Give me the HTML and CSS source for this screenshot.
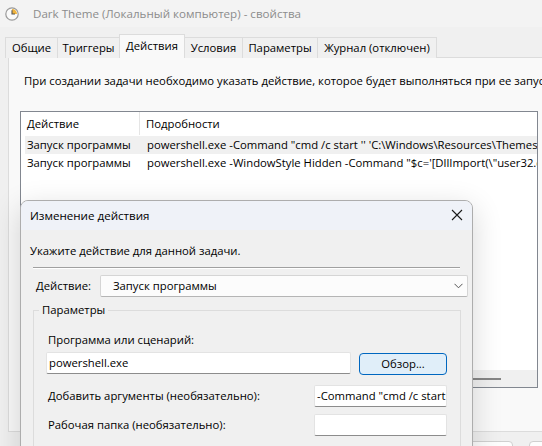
FILE: index.html
```html
<!DOCTYPE html>
<html lang="ru">
<head>
<meta charset="utf-8">
<link rel="stylesheet" href="styles.css">
</head>
<body>
<div class="titlebar">
  <svg class="clock" width="14" height="14" viewBox="0 0 14 14">
    <circle cx="7" cy="7" r="6.2" fill="#fafafa" stroke="#9a9a9a" stroke-width="1.2"/>
    <path d="M7 7 L7 2 A5 5 0 0 1 12 7 Z" fill="#f0b43c"/>
    <path d="M7 3.2 V7 H10" fill="none" stroke="#555" stroke-width="1.1"/>
  </svg>
  <span class="title-text">Dark Theme (Локальный компьютер) - свойства</span>
</div>
<div class="tabs">
  <div class="tab t1">Общие</div>
  <div class="tab t2">Триггеры</div>
  <div class="tab t3 active">Действия</div>
  <div class="tab t4">Условия</div>
  <div class="tab t5">Параметры</div>
  <div class="tab t6">Журнал (отключен)</div>
</div>
<div class="panel">
  <p class="intro">При создании задачи необходимо указать действие, которое будет выполняться при ее запуске.</p>
  <div class="list">
    <div class="list-head">
      <div class="col1 head-col1">Действие</div>
      <div class="col2">Подробности</div>
    </div>
    <div class="row sel">
      <div class="col1">Запуск программы</div>
      <div class="col2">powershell.exe -Command "cmd /c start '' 'C:\Windows\Resources\Themes\dark.theme'"</div>
    </div>
    <div class="row">
      <div class="col1">Запуск программы</div>
      <div class="col2">powershell.exe -WindowStyle Hidden -Command "$c='[DllImport(\"user32.dll\")]"</div>
    </div>
    <div class="list-fill"></div>
    <div class="hscroll"><div class="thumb"></div></div>
  </div>
</div>
<div class="bottom-buttons">
  <div class="pbtn">Создать...</div>
  <div class="pbtn">Изменить...</div>
</div>

<div class="dialog">
  <div class="dlg-title">
    <span>Изменение действия</span>
    <svg class="close" width="12" height="12" viewBox="0 0 12 12">
      <path d="M1 1 L11 11 M11 1 L1 11" stroke="#1a1a1a" stroke-width="1.1" fill="none"/>
    </svg>
  </div>
  <div class="dlg-body">
    <p class="dlg-intro">Укажите действие для данной задачи.</p>
    <div class="sep"></div>
    <div class="action-row">
      <span class="action-label">Действие:</span>
      <div class="combo">
        <span>Запуск программы</span>
        <svg width="9" height="6" viewBox="0 0 9 6"><path d="M0.5 0.8 L4.5 4.8 L8.5 0.8" stroke="#555" stroke-width="1" fill="none"/></svg>
      </div>
    </div>
    <fieldset class="group">
      <legend>Параметры</legend>
      <div class="grp-inner">
        <div class="lbl first">Программа или сценарий:</div>
        <div class="prog-row">
          <div class="input wide">powershell.exe</div>
          <div class="browse">Обзор...</div>
        </div>
        <div class="arg-row r1">
          <span class="lbl">Добавить аргументы (необязательно):</span>
          <div class="input narrow">-Command "cmd /c start '' 'C:\Windows'"</div>
        </div>
        <div class="arg-row r2">
          <span class="lbl">Рабочая папка (необязательно):</span>
          <div class="input narrow"></div>
        </div>
      </div>
    </fieldset>
  </div>
</div>
</body>
</html>
```
FILE: styles.css
```css
* { box-sizing: border-box; }
html, body {
  margin: 0;
  width: 542px;
  height: 446px;
  overflow: hidden;
}
body {
  position: relative;
  background: #f0f0f0;
  font-family: "Open Sans", "Noto Sans", sans-serif;
  font-size: 11.3px;
  line-height: 16px;
  color: #000;
}
.titlebar {
  height: 27px;
  background: #f3f3f3;
  display: flex;
  align-items: center;
  padding-left: 5px;
}
.clock { flex: none; }
.title-text {
  margin-left: 14px;
  color: #8c8c8c;
  white-space: nowrap;
  font-size: 11.6px;
}
.tabs {
  display: flex;
  align-items: flex-end;
  margin-left: 5px;
  height: 31px;
  position: relative;
  z-index: 1;
  margin-bottom: -1px;
}
.tab {
  height: 21px;
  padding-top: 2px;
  border: 1px solid #dcdcdc;
  border-bottom: none;
  border-right: none;
  background: #f0f0f0;
  white-space: nowrap;
  text-align: center;
}
.tab.t1 { width: 52px; }
.tab.t2 { width: 62px; }
.tab.t3 { width: 66px; }
.tab.t4 { width: 57px; }
.tab.t5 { width: 75px; }
.tab.t6 { width: 120px; border-right: 1px solid #dcdcdc; }
.tab.active {
  height: 24px;
  padding-top: 3px;
  background: #f9f9f9;
  border-right: 1px solid #dcdcdc;
}
.tab.active + .tab { border-left: none; }
.panel {
  margin-left: 8px;
  width: 560px;
  height: 375px;
  background: #f9f9f9;
  border: 1px solid #dcdcdc;
  padding: 15px 0 0 15px;
}
.intro {
  margin: 0;
  white-space: nowrap;
  overflow: hidden;
  width: 518px;
}
.list {
  margin: 22px 0 0 -4px;
  width: 518px;
  height: 277px;
  background: #fff;
  border: 1px solid #828790;
  display: flex;
  flex-direction: column;
  overflow: hidden;
}
.list-head {
  display: flex;
  height: 23px;
  flex: none;
  margin-bottom: 1px;
}
.list-head .col1 { padding-left: 6px; border-right: 1px solid #e5e5e5; }
.list-head .col2 { padding-left: 6px; }
.list-head > div { display: flex; align-items: center; }
.col1 { width: 119px; flex: none; white-space: nowrap; }
.col2 { white-space: nowrap; overflow: hidden; }
.row {
  display: flex;
  height: 18px;
  align-items: center;
  margin-left: 4px;
  flex: none;
}
.row .col1 { width: 115px; padding-left: 2px; }
.row .col2 { padding-left: 7px; }
.row.sel { background: #f0f0f0; }
.list-fill { flex: 1; }
.hscroll {
  height: 17px;
  flex: none;
  background: #f0f0f0;
  display: flex;
  align-items: center;
  padding-left: 452px;
}
.thumb { width: 28px; height: 2px; background: #868686; }
.bottom-buttons {
  display: flex;
  gap: 16px;
  margin: 9px 0 0 438px;
}
.pbtn {
  width: 75px;
  height: 24px;
  flex: none;
  background: #fdfdfd;
  border: 1px solid #d0d0d0;
  border-radius: 4px;
  text-align: center;
  line-height: 22px;
  white-space: nowrap;
  overflow: hidden;
}

/* dialog window */
.dialog {
  position: absolute;
  left: 20px;
  top: 200px;
  width: 453px;
  height: 280px;
  border: 1px solid #adadad;
  border-radius: 8px 8px 0 0;
  background: #f0f0f0;
  box-shadow: 0 8px 30px rgba(0, 0, 0, 0.16);
  overflow: hidden;
}
.dlg-title {
  height: 29px;
  background: #eff2f8;
  display: flex;
  align-items: center;
  justify-content: space-between;
  padding: 0 9px 0 9px;
  font-size: 11.6px;
}
.close { margin-top: -1px; }
.dlg-body { padding: 0; }
.dlg-intro {
  margin: 13px 0 0 9px;
}
.sep {
  margin: 8px 0 0 12px;
  width: 427px;
  height: 2px;
  border-top: 1px solid #a0a0a0;
  border-bottom: 1px solid #ffffff;
}
.action-row {
  display: flex;
  align-items: center;
  margin: 6px 0 0 15px;
}
.action-label { width: 64px; flex: none; }
.combo {
  width: 368px;
  height: 22px;
  background: #fcfcfc;
  border: 1px solid #d5d5d5;
  border-bottom-color: #b5b5b5;
  border-radius: 2px;
  display: flex;
  align-items: center;
  justify-content: space-between;
  padding: 0 4px 0 12px;
}
.group {
  margin: 5px 0 0 12px;
  width: 428px;
  padding: 0;
  border: 1px solid #dcdcdc;
  min-height: 200px;
}
.group legend {
  margin-left: 5px;
  padding: 0 3px;
}
.grp-inner { padding: 0 13px 0 12px; }
.lbl { padding-left: 2px; white-space: nowrap; }
.lbl.first { margin-top: 14px; }
.input {
  height: 22px;
  background: #fff;
  border: 1px solid #e3e3e3;
  border-bottom-color: #8c8c8c;
  border-radius: 2px;
  padding: 0 2px;
  line-height: 20px;
  white-space: nowrap;
  overflow: hidden;
}
.prog-row {
  display: flex;
  gap: 8px;
  margin-top: 4px;
  align-items: flex-start;
}
.input.wide { width: 305px; }
.browse {
  width: 88px;
  height: 22px;
  margin-top: 1px;
  background: #e0eef9;
  border: 1px solid #0067c0;
  border-radius: 4px;
  text-align: center;
  line-height: 20px;
}
.arg-row {
  display: flex;
  align-items: center;
  justify-content: space-between;
}
.arg-row.r1 { margin-top: 10px; }
.arg-row.r2 { margin-top: 7px; }
.input.narrow { width: 133px; }
```
